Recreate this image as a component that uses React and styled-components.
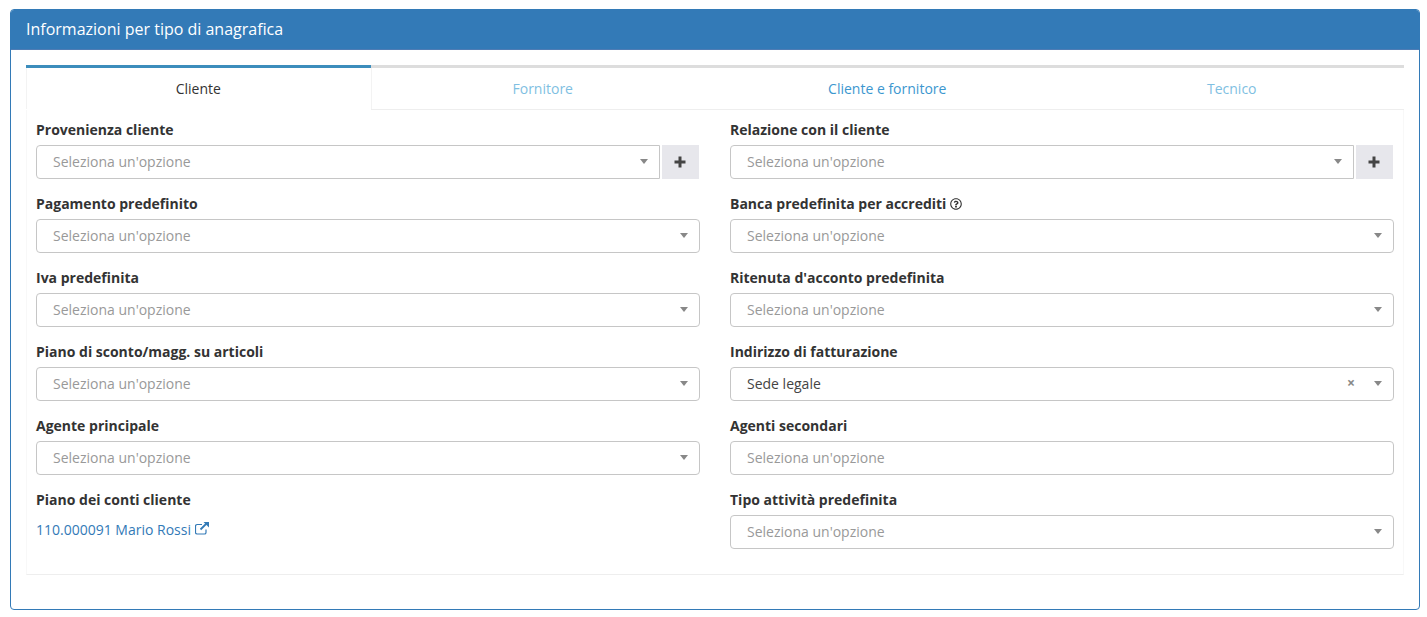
import React from 'react';
import styled, { createGlobalStyle } from 'styled-components';
import { FaRegQuestionCircle } from 'react-icons/fa';

const Global = createGlobalStyle`
  html, body { margin: 0; padding: 0; background: #fff; }
  body { font-family: "Open Sans", "Liberation Sans", sans-serif; font-size: 14px; color: #333; }
  * { box-sizing: border-box; }
`;
const Page = styled.div`padding: 9px 7px 0 10px; height: 617px; overflow: hidden;`;
const Panel = styled.section`
  height: 601px;
  border: 1px solid #337ab7;
  border-radius: 4px;
  overflow: hidden;
`;
const Heading = styled.header`
  height: 41px;
  margin: -1px -1px 0;
  padding: 0 16px;
  background: #337ab7;
  border-bottom: 1px solid #4f7cb4;
  color: #fff;
  font-size: 16px;
  line-height: 40px;
`;
const Body = styled.div`padding: 15px 15px 0;`;
const Tabs = styled.nav`display: grid; grid-template-columns: repeat(4, 1fr);`;
const Tab = styled.div`
  height: 45px;
  border-top: 3px solid ${p => (p.$active ? '#3c8dbc' : '#ddd')};
  border-bottom: 1px solid ${p => (p.$active ? 'transparent' : '#eee')};
  box-shadow: ${p => (p.$edge ? 'inset 1px 0 0 #f3f3f3' : 'none')};
  color: ${p => p.$color};
  text-align: center;
  line-height: 41px;
`;
const Content = styled.div`
  height: 465px;
  padding: 8px 9px 0;
  border: 1px solid #f8f8f8;
  border-top: 0;
  border-bottom: 1px solid #eeeeee;
  display: grid;
  grid-template-columns: 1fr 1fr;
  column-gap: 30px;
  grid-auto-rows: 74px;
`;
const Field = styled.div`display: flex; flex-direction: column;`;
const Label = styled.label`
  height: 27px;
  font-weight: 700;
  font-size: 14px;
  line-height: 24px;
  color: #333;
  display: flex;
  align-items: flex-start;
  gap: 4px;
  align-self: flex-start;
`;
const Help = styled(FaRegQuestionCircle)`width: 12px; height: 12px; margin-top: 6px; color: #333;`;
const Group = styled.div`
  display: flex;
  gap: 2px;
  padding-right: ${p => (p.$withButton ? '1px' : '0')};
`;
const SelectBox = styled.div`
  flex: 1;
  min-width: 0;
  height: 34px;
  padding: 0 8px 2px 16px;
  display: flex;
  align-items: center;
  border: 1px solid #c6c6c6;
  border-radius: ${p => (p.$grouped ? '4px 0 0 4px' : '4px')};
  background: #fff;
`;
const Value = styled.span`flex: 1; color: ${p => (p.$placeholder ? '#999' : '#444')}; font-size: 14px;`;
const Clear = styled.span`
  margin-right: 19px;
  color: #888;
  font-size: 14px;
  font-weight: 700;
  line-height: 1;
`;
const Arrow = styled.i`
  width: 0;
  height: 0;
  margin-right: 3px;
  border-style: solid;
  border-width: 5px 4px 0;
  border-color: #888 transparent transparent;
`;
const AddButton = styled.button`
  width: 37px;
  height: 34px;
  padding: 0 1px 0 0;
  border: 0;
  background: #e7e7ec;
  display: flex;
  align-items: center;
  justify-content: center;
`;
const LinkRow = styled.a`
  margin-top: 5px;
  color: #337ab7;
  font-size: 14px;
  line-height: 20px;
  display: inline-flex;
  align-items: center;
  gap: 4px;
  align-self: flex-start;
`;
const LinkIcon = styled.svg`margin-top: -3px;`;

const PlusIcon = () => (
  <svg width="12" height="12" viewBox="0 0 12 12">
    <path d="M4.5 .5h3V4.5h4v3h-4v4h-3v-4H.5v-3h4Z" fill="#444" />
  </svg>
);

const ExternalIcon = () => (
  <LinkIcon width="14" height="13" viewBox="0 0 14 13" fill="none" stroke="#337ab7">
    <path d="M11 7.5V10.4A1.6 1.6 0 0 1 9.4 12H2.1A1.6 1.6 0 0 1 .5 10.4V4.1A1.6 1.6 0 0 1 2.1 2.5H7" strokeWidth="1.2" />
    <path d="M5.5 7.5 12 1" strokeWidth="1.8" />
    <path d="M8.5 0H14V5.5Z" fill="#337ab7" stroke="none" />
  </LinkIcon>
);

const Select = ({ value, clear, grouped, noArrow }) => (
  <SelectBox $grouped={grouped}>
    <Value $placeholder={!value}>{value || "Seleziona un'opzione"}</Value>
    {clear && <Clear>×</Clear>}
    {!noArrow && <Arrow />}
  </SelectBox>
);

const rows = [
  { label: 'Provenienza cliente', add: true },
  { label: 'Relazione con il cliente', add: true },
  { label: 'Pagamento predefinito' },
  { label: 'Banca predefinita per accrediti', help: true },
  { label: 'Iva predefinita' },
  { label: "Ritenuta d'acconto predefinita" },
  { label: 'Piano di sconto/magg. su articoli' },
  { label: 'Indirizzo di fatturazione', value: 'Sede legale', clear: true },
  { label: 'Agente principale' },
  { label: 'Agenti secondari', noArrow: true },
  { label: 'Piano dei conti cliente', link: true },
  { label: 'Tipo attività predefinita' },
];

const tabs = [
  { name: 'Cliente', color: '#333', active: true, edge: true },
  { name: 'Fornitore', color: '#7fbfe2', edge: true },
  { name: 'Cliente e fornitore', color: '#3c97cf' },
  { name: 'Tecnico', color: '#7fbfe2' },
];

export default function App() {
  return (
    <Page>
      <Global />
      <Panel>
        <Heading>Informazioni per tipo di anagrafica</Heading>
        <Body>
          <Tabs>
            {tabs.map(t => (
              <Tab key={t.name} $active={t.active} $color={t.color} $edge={t.edge}>{t.name}</Tab>
            ))}
          </Tabs>
          <Content>
            {rows.map(r => (
              <Field key={r.label}>
                <Label>{r.label}{r.help && <Help />}</Label>
                {r.link ? (
                  <LinkRow>110.000091 Mario Rossi <ExternalIcon /></LinkRow>
                ) : r.add ? (
                  <Group $withButton>
                    <Select grouped />
                    <AddButton><PlusIcon /></AddButton>
                  </Group>
                ) : (
                  <Group>
                    <Select value={r.value} clear={r.clear} noArrow={r.noArrow} />
                  </Group>
                )}
              </Field>
            ))}
          </Content>
        </Body>
      </Panel>
    </Page>
  );
}
